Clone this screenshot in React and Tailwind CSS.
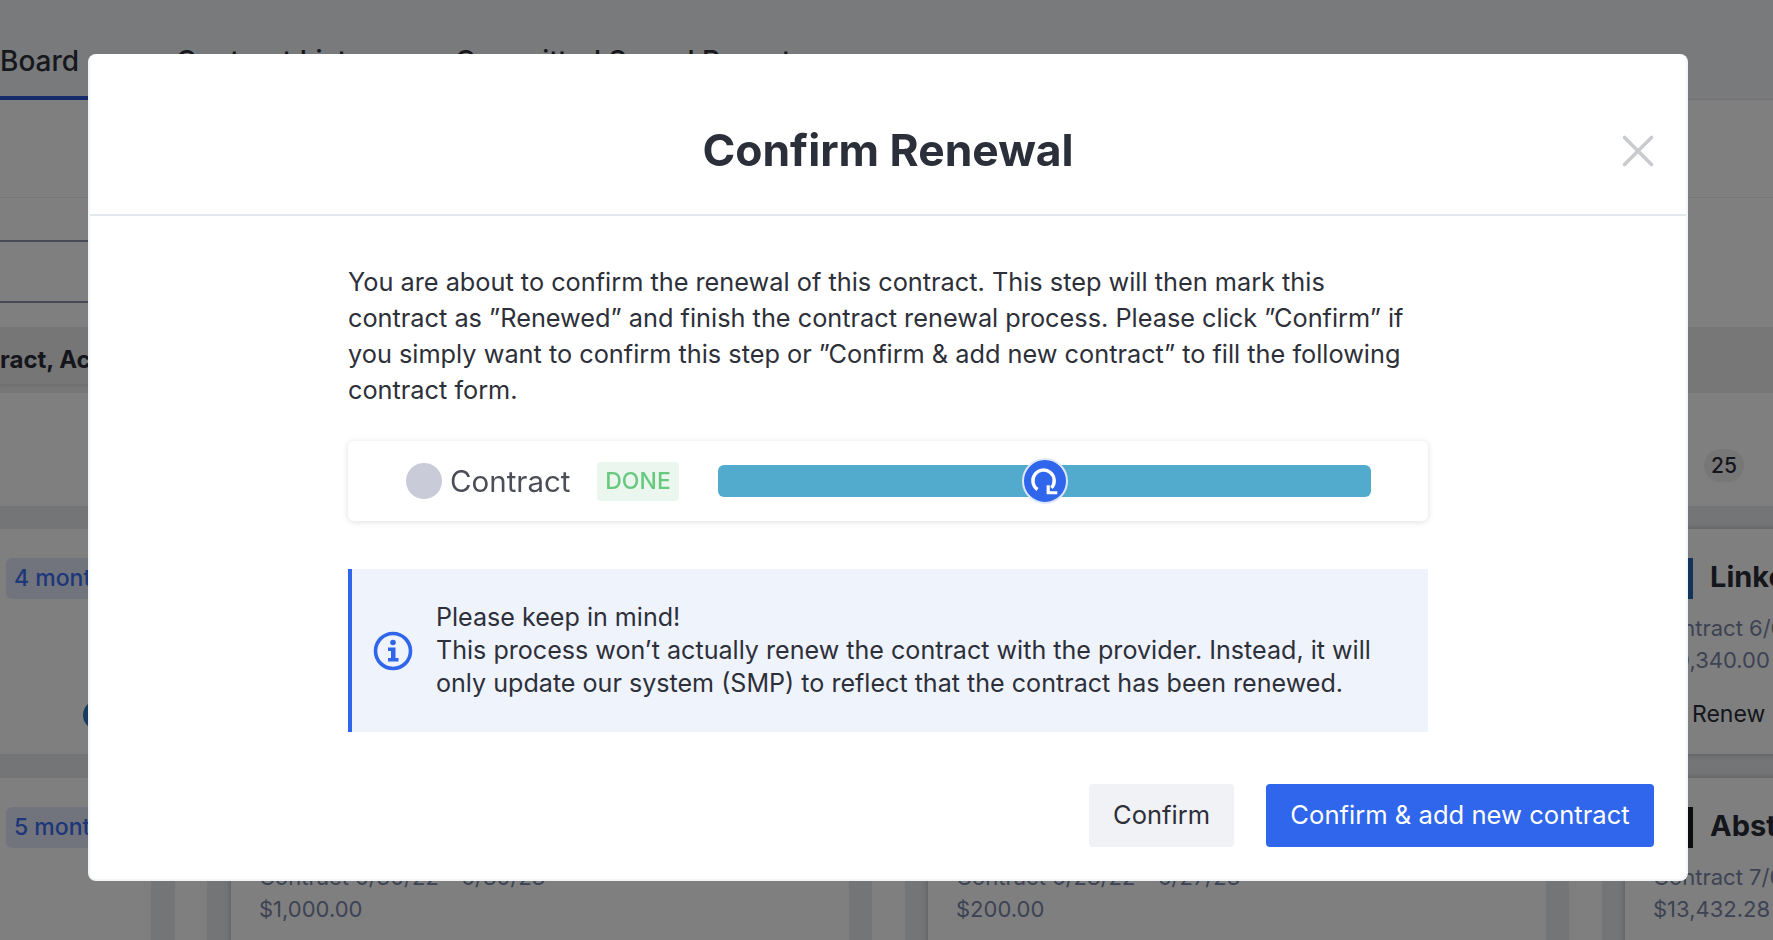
import React from "react";
import { X } from "lucide-react";

const font = "font-['Inter','Noto_Sans',sans-serif]";

function ContractCard({ logo, name, contract, amount, renew }) {
  return (
    <div className="w-[618px] shrink-0 bg-white pl-[28px] pt-[29px] shadow-[0_0_6px_rgba(0,0,0,0.25)]">
      <div className="flex h-[41px] items-center gap-[17px]">
        <div className={`h-[41px] w-[40px] ${logo}`} />
        <span className="pb-[3px] text-[29px] font-bold text-[#2a2d37]">{name}</span>
      </div>
      <p className="mt-[13px] whitespace-nowrap text-[22px] leading-[32px] text-[#7a86a8]">{contract}</p>
      <p className="whitespace-nowrap text-[22px] leading-[33px] text-[#7a86a8]">{amount}</p>
      {renew && <p className="ml-[39px] mt-[20px] text-[23px] text-[#2a2d37]">Renew</p>}
    </div>
  );
}

function BoardRow({ months, circle, cards }) {
  return (
    <div className="flex h-[225px] w-[2400px] bg-white">
      <div className="relative w-[151px] shrink-0 pl-[6px] pt-[29px]">
        <div className="h-[41px] w-[200px] rounded-md bg-[#e2e8f8] pl-[8px] text-[23px] font-medium leading-[41px] text-[#3b6ef5]">
          {months}
        </div>
        {circle && <div className="absolute left-[83px] top-[171px] h-[30px] w-[30px] rounded-full bg-[#2f78c4]" />}
      </div>
      <div className="w-[24px] shrink-0 bg-[#e9eaec]" />
      <div className="w-[32px] shrink-0 bg-white" />
      <div className="w-[24px] shrink-0 bg-[#e9eaec]" />
      {cards[0]}
      <div className="w-[23px] shrink-0 bg-[#e9eaec]" />
      <div className="w-[33px] shrink-0 bg-white" />
      <div className="w-[23px] shrink-0 bg-[#e9eaec]" />
      {cards[1]}
      <div className="w-[23px] shrink-0 bg-[#e9eaec]" />
      <div className="w-[33px] shrink-0 bg-white" />
      <div className="w-[23px] shrink-0 bg-[#e9eaec]" />
      {cards[2]}
    </div>
  );
}

function Backdrop() {
  return (
    <div className="h-full w-full overflow-hidden bg-white">
      <div className="flex h-[100px] items-start border-b border-[#e6e7ea] bg-[#f3f4f8] pt-[45px] text-[28px] leading-[32px] text-[#2d3039]">
        <div className="h-[55px] w-[120px] border-b-4 border-[#2f55d8] font-medium">Board</div>
        <div className="ml-[56px] w-[279px] font-medium">Contract List</div>
        <div className="font-medium">Committed Spend Report</div>
      </div>
      <div className="h-[98px] border-b border-[#eceef0]" />
      <div className="h-[129px] pt-[42px]">
        <div className="h-[63px] w-[200px] border-y-2 border-[#8f94a8]" />
      </div>
      <div className="h-[66px] bg-[#efeff1]">
        <div className="h-[57px] w-[200px] bg-[#ececee] text-[24px] font-bold leading-[65px] text-[#2a2d37] shadow-[0_2px_3px_rgba(0,0,0,0.08)]">
          ract, Ac
        </div>
      </div>
      <div className="flex h-[113px] items-center justify-end pr-[29px] pt-[32px]">
        <span className="w-[40px] rounded-full bg-[#eeeef0] text-center text-[21px] font-medium leading-[33px] text-[#2a2d37]">25</span>
      </div>
      <div className="h-[23px] bg-[#e9eaec]" />
      <BoardRow
        months="4 months"
        circle
        cards={[
          <ContractCard key="a" logo="bg-[#e2e4ea]" name="Zoom" contract="Contract 4/10/22 - 4/09/23" amount="$900.00" renew />,
          <ContractCard key="b" logo="bg-[#e2e4ea]" name="Slack" contract="Contract 4/20/22 - 4/19/23" amount="$700.00" renew />,
          <ContractCard key="c" logo="bg-[#2867b2]" name="LinkedIn" contract="Contract 6/01/22 - 5/31/23" amount="$10,340.00" renew />,
        ]}
      />
      <div className="h-[24px] bg-[#e9eaec]" />
      <BoardRow
        months="5 months"
        cards={[
          <ContractCard key="a" logo="bg-[#e2e4ea]" name="Asana" contract="Contract 6/30/22 - 6/30/23" amount="$1,000.00" />,
          <ContractCard key="b" logo="bg-[#e2e4ea]" name="Notion" contract="Contract 6/28/22 - 6/27/23" amount="$200.00" />,
          <ContractCard key="c" logo="bg-[#1a1a1a]" name="Abstract" contract="Contract 7/01/22 - 6/30/23" amount="$13,432.28" />,
        ]}
      />
    </div>
  );
}

function RenewalPreview() {
  return (
    <div className="mt-[33px] flex h-[80px] items-center rounded-md bg-white pl-[58px] shadow-[0_1px_6px_rgba(0,0,0,0.13)]">
      <div className="h-[36px] w-[36px] rounded-full bg-[#c9ccd8] blur-[0.5px]" />
      <span className="ml-[8px] w-[147px] text-[29.5px] text-[#4b4e58] blur-[0.4px]">Contract</span>
      <span className="flex h-[39px] w-[82px] items-center justify-center rounded-sm bg-[#ebf7ee] text-[23px] font-medium text-[#66c97f] blur-[0.4px]">
        DONE
      </span>
      <div className="relative ml-[39px] h-[32px] w-[653px] rounded-md bg-[#52abcd]">
        <div className="absolute left-[304px] top-[-7px] flex h-[46px] w-[46px] items-center justify-center rounded-full border-2 border-[#dfe8fb] bg-[#2f66ec]">
          <svg width="32" height="32" viewBox="0 0 30 30" fill="none" stroke="white" strokeWidth="3.2">
            <path d="M8 23 A10 10 0 1 1 21 21.5" />
            <path d="M18 19 V26 H26.5" strokeWidth="3" />
          </svg>
        </div>
      </div>
    </div>
  );
}

export default function App() {
  return (
    <div className={`relative h-screen w-full overflow-hidden ${font}`}>
      <Backdrop />
      <div className="fixed inset-0 bg-black/50 pl-[88px] pt-[54px]">
        <div className="w-[1600px] rounded-lg border-x-2 border-b-2 border-[#f1f5f8] bg-white text-[#2d3039]">
          <div className="relative flex h-[162px] items-center justify-center border-b-2 border-[#e3e8ec] pt-[32px]">
            <h2 className="text-[44.4px] font-bold text-[#2b2f3a]">Confirm Renewal</h2>
            <X className="absolute right-[21px] top-[70px] text-[#c9cbcf]" size={54} strokeWidth={1.6} />
          </div>
          <div className="px-[258px] pt-[48px]">
            <p className="whitespace-nowrap text-[25.3px] leading-[36px]">
              You are about to confirm the renewal of this contract. This step will then mark this
              <br />
              contract as ”Renewed” and finish the contract renewal process. Please click ”Confirm” if
              <br />
              you simply want to confirm this step or ”Confirm &amp; add new contract” to fill the following
              <br />
              contract form.
            </p>
            <RenewalPreview />
            <div className="mt-[48px] flex h-[163px] items-center border-l-4 border-[#2f66ec] bg-[#eff3fc]">
              <svg className="ml-[21px] shrink-0" width="40" height="40" viewBox="0 0 40 40" fill="none">
                <circle cx="20" cy="20" r="17.5" stroke="#2f66ec" strokeWidth="3.6" />
                <circle cx="20" cy="11.5" r="2.8" fill="#2f66ec" />
                <path d="M15 16.5 H22.5 V27 H25.5 V30.5 H15 V27 H18 V20 H15 Z" fill="#2f66ec" />
              </svg>
              <p className="ml-[23px] whitespace-nowrap text-[25.1px] leading-[33px]">
                Please keep in mind!
                <br />
                This process won’t actually renew the contract with the provider. Instead, it will
                <br />
                only update our system (SMP) to reflect that the contract has been renewed.
              </p>
            </div>
          </div>
          <div className="flex justify-end gap-[32px] pb-[32px] pr-[32px] pt-[52px]">
            <button className="h-[63px] w-[145px] rounded bg-[#f1f2f5] text-[25.5px] text-[#2d3039]">Confirm</button>
            <button className="h-[63px] w-[388px] rounded bg-[#2f66ec] text-[25.6px] text-white">
              Confirm &amp; add new contract
            </button>
          </div>
        </div>
      </div>
    </div>
  );
}
